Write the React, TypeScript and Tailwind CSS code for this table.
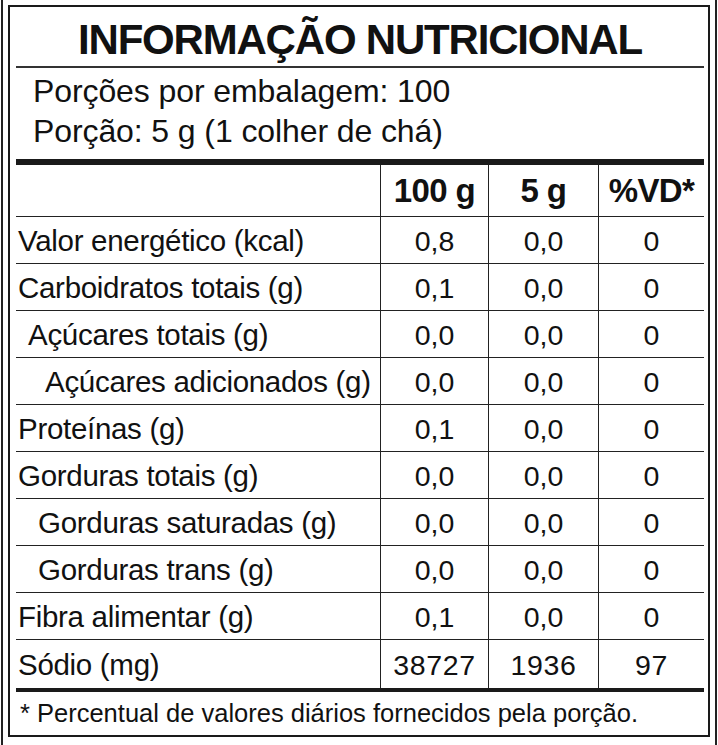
const rows = [
    {label: "Valor energético (kcal)", indent: "pl-[2px]", v: ["0,8", "0,0", "0"]},
    {label: "Carboidratos totais (g)", indent: "pl-[2px]", v: ["0,1", "0,0", "0"]},
    {label: "Açúcares totais (g)", indent: "pl-[12px]", v: ["0,0", "0,0", "0"]},
    {label: "Açúcares adicionados (g)", indent: "pl-[29px]", v: ["0,0", "0,0", "0"]},
    {label: "Proteínas (g)", indent: "pl-[2px]", v: ["0,1", "0,0", "0"]},
    {label: "Gorduras totais (g)", indent: "pl-[2px]", v: ["0,0", "0,0", "0"]},
    {label: "Gorduras saturadas (g)", indent: "pl-[22px]", v: ["0,0", "0,0", "0"]},
    {label: "Gorduras trans (g)", indent: "pl-[22px]", v: ["0,0", "0,0", "0"]},
    {label: "Fibra alimentar (g)", indent: "pl-[2px]", v: ["0,1", "0,0", "0"]},
    {label: "Sódio (mg)", indent: "pl-[2px]", v: ["38727", "1936", "97"]},
];

export default function App() {
    return (
        <div className="w-[718px] h-[745px] bg-white font-['Liberation_Sans',Arial,sans-serif] text-[#111]">
            {/* edge lines from the cropped label */}
            <div className="mx-[1px] h-full border-x-2 border-[#222] pt-[5px] pb-[8px] px-[5px]">
                <div className="h-full border-2 border-[#1a1a1a] pl-[6px] pr-[4px] flex flex-col">
                    {/* title */}
                    <div className="pt-[12px] pb-[5px] text-center">
                        <h1 className="text-[42px] leading-[42px] font-bold tracking-[-1.2px]">INFORMAÇÃO NUTRICIONAL</h1>
                    </div>
                    <div className="h-[2px] bg-[#333]" />

                    {/* portions */}
                    <div className="pt-[3px] pb-[8px] pl-[17px] text-[32px] leading-[40px] tracking-[-0.1px]">
                        <p>Porções por embalagem: 100</p>
                        <p>Porção: 5 g (1 colher de chá)</p>
                    </div>
                    <div className="h-[6px] bg-[#1a1a1a]" />

                    {/* table */}
                    <div className="grid grid-cols-[364px_108px_110px_106px]">
                        <div className="h-[52px] border-b border-[#222]" />
                        <div className="h-[52px] border-b border-l border-[#222] flex items-center justify-center text-[33px] font-bold tracking-[-0.6px]">100 g</div>
                        <div className="h-[52px] border-b border-l border-[#222] flex items-center justify-center text-[33px] font-bold tracking-[-0.6px]">5 g</div>
                        <div className="h-[52px] border-b border-l border-[#222] flex items-center justify-center text-[33px] font-bold tracking-[-0.6px]">%VD*</div>

                        {rows.map((r, i) => {
                            const last = i === rows.length - 1;
                            const b = last ? "h-[48px]" : "h-[47px] border-b";
                            return (
                                <div key={r.label} className="contents">
                                    <div className={`${b} border-[#222] flex items-center pt-[2px] text-[29.5px] tracking-[-0.3px] ${r.indent}`}>{r.label}</div>
                                    {r.v.map((val, j) => (
                                        <div key={j} className={`${b} border-l border-[#222] flex items-center justify-center pt-[2px] text-[28.5px] ${last ? "tracking-[0.6px]" : ""}`}>
                                            {val}
                                        </div>
                                    ))}
                                </div>
                            );
                        })}
                    </div>
                    <div className="h-[4px] bg-[#1a1a1a]" />

                    {/* footnote */}
                    <div className="flex-1 flex items-center pl-[4px] text-[25.5px]">
                        * Percentual de valores diários fornecidos pela porção.
                    </div>
                </div>
            </div>
        </div>
    );
}
